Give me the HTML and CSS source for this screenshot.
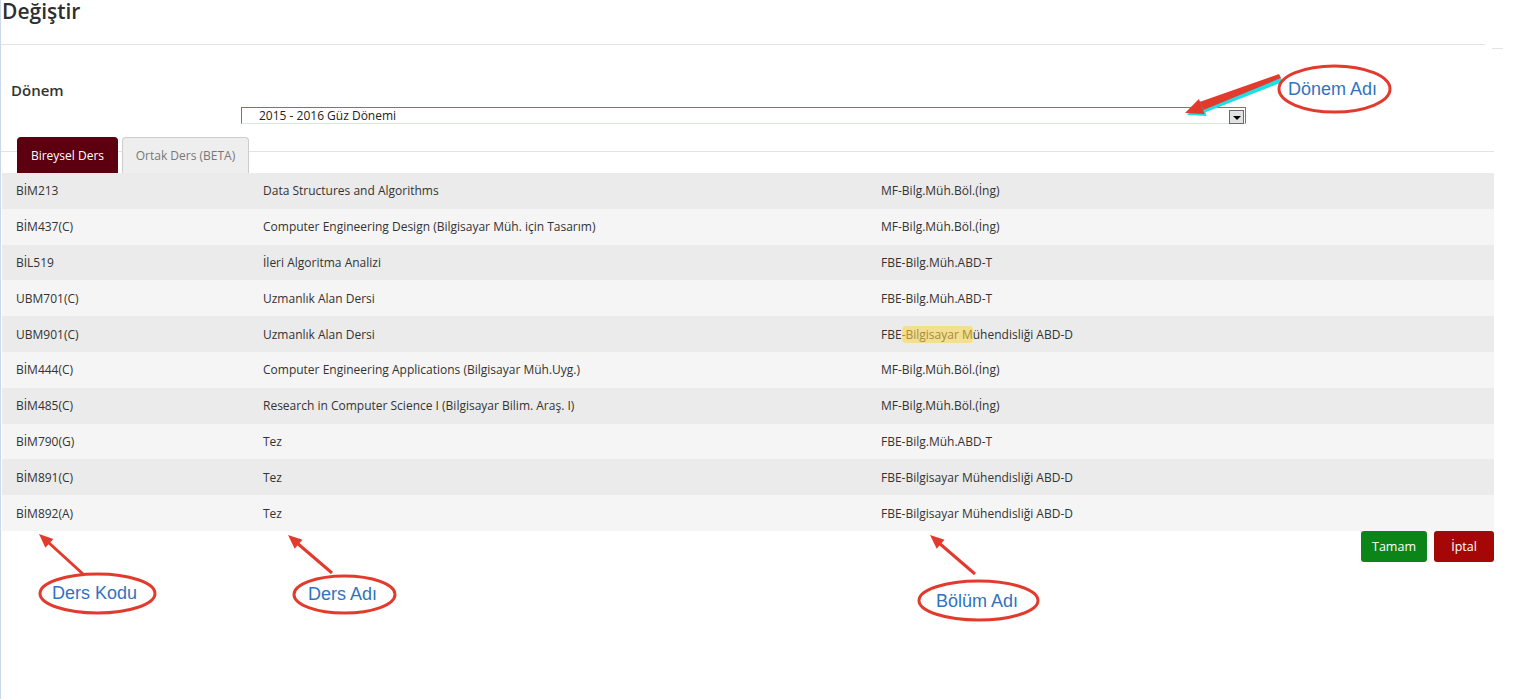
FILE: index.html
```html
<!DOCTYPE html>
<html lang="tr">
<head>
<meta charset="utf-8">
<title>Değiştir</title>
<link rel="stylesheet" href="styles.css">
</head>
<body>
<div class="page">
  <h1 class="title">Değiştir</h1>
  <div class="rule-row"><div class="rule"></div><div class="dash"></div></div>

  <div class="field">
    <div class="label">Dönem</div>
    <div class="select">
      <span class="select-text">2015 - 2016 Güz Dönemi</span>
      <span class="select-btn"><span class="caret"></span></span>
    </div>
  </div>

  <div class="tabs">
    <div class="tab active">Bireysel Ders</div>
    <div class="tab">Ortak Ders (BETA)</div>
  </div>

  <div class="table">
    <div class="row odd"><div class="c1">BİM213</div><div class="c2">Data Structures and Algorithms</div><div class="c3">MF-Bilg.Müh.Böl.(İng)</div></div>
    <div class="row even"><div class="c1">BİM437(C)</div><div class="c2">Computer Engineering Design (Bilgisayar Müh. için Tasarım)</div><div class="c3">MF-Bilg.Müh.Böl.(İng)</div></div>
    <div class="row odd"><div class="c1">BİL519</div><div class="c2">İleri Algoritma Analizi</div><div class="c3">FBE-Bilg.Müh.ABD-T</div></div>
    <div class="row even"><div class="c1">UBM701(C)</div><div class="c2">Uzmanlık Alan Dersi</div><div class="c3">FBE-Bilg.Müh.ABD-T</div></div>
    <div class="row odd"><div class="c1">UBM901(C)</div><div class="c2">Uzmanlık Alan Dersi</div><div class="c3">FBE<span class="hl">-Bilgisayar M</span>ühendisliği ABD-D</div></div>
    <div class="row even"><div class="c1">BİM444(C)</div><div class="c2">Computer Engineering Applications (Bilgisayar Müh.Uyg.)</div><div class="c3">MF-Bilg.Müh.Böl.(İng)</div></div>
    <div class="row odd"><div class="c1">BİM485(C)</div><div class="c2">Research in Computer Science I (Bilgisayar Bilim. Araş. I)</div><div class="c3">MF-Bilg.Müh.Böl.(İng)</div></div>
    <div class="row even"><div class="c1">BİM790(G)</div><div class="c2">Tez</div><div class="c3">FBE-Bilg.Müh.ABD-T</div></div>
    <div class="row odd"><div class="c1">BİM891(C)</div><div class="c2">Tez</div><div class="c3">FBE-Bilgisayar Mühendisliği ABD-D</div></div>
    <div class="row even"><div class="c1">BİM892(A)</div><div class="c2">Tez</div><div class="c3">FBE-Bilgisayar Mühendisliği ABD-D</div></div>
  </div>

  <div class="actions">
    <button class="btn ok">Tamam</button>
    <button class="btn cancel">İptal</button>
  </div>

  <svg class="notes" width="1524" height="699" viewBox="0 0 1524 699">
    <g fill="#22dde6">
      <polygon points="1281,78 1283,82 1205,112.5 1201,104"/>
      <polygon points="1187,115 1200.9,101.1 1206.7,115.9"/>
    </g>
    <g fill="#e23b2e">
      <polygon points="1279,74 1281,78 1203.5,110 1199.5,102"/>
      <polygon points="1185,113 1198.9,99.1 1204.7,113.9"/>
    </g>
    <g stroke="#e23b2e" stroke-width="3" fill="none">
      <line x1="83" y1="574" x2="48" y2="542"/>
      <line x1="332" y1="573" x2="297" y2="543"/>
      <line x1="975" y1="574" x2="939" y2="543"/>
      <ellipse cx="1334.5" cy="89" rx="55.5" ry="23"/>
      <ellipse cx="97.5" cy="593.5" rx="57.5" ry="19.5"/>
      <ellipse cx="344.5" cy="594.5" rx="50.5" ry="18.5"/>
      <ellipse cx="978.5" cy="600.5" rx="59.5" ry="19.5"/>
    </g>
    <g fill="#e23b2e">
      <polygon points="39,534 53.4,539 45.4,547.8"/>
      <polygon points="288,535 302.5,539.7 294.7,548.7"/>
      <polygon points="930,535 944.5,539.7 936.7,548.7"/>
    </g>
    <g class="note-text" fill="#3272bf">
      <text x="1288" y="95">Dönem Adı</text>
      <text x="52" y="599">Ders Kodu</text>
      <text x="308" y="600">Ders Adı</text>
      <text x="936" y="607">Bölüm Adı</text>
    </g>
  </svg>
</div>
</body>
</html>
```
FILE: styles.css
```css
html, body {
  margin: 0;
  padding: 0;
  background: #ffffff;
}
body {
  font-family: "Open Sans", "DejaVu Sans", sans-serif;
  color: #333333;
}
.page {
  position: relative;
  width: 1523px;
  height: 699px;
  border-left: 1px solid #c9d8ea;
  overflow: hidden;
}
.title {
  margin: 0;
  padding: 0 0 0 1px;
  height: 44px;
  box-sizing: border-box;
  font-size: 21px;
  line-height: 23px;
  font-weight: 600;
  color: #2f2f2f;
}
.rule-row {
  display: flex;
  align-items: flex-start;
}
.rule {
  width: 1484px;
  height: 1px;
  background: #e3e3e3;
}
.dash {
  width: 11px;
  height: 1px;
  margin: 4px 0 0 7px;
  background: #e3e3e3;
}
.field {
  padding-top: 31px;
}
.label {
  padding-left: 10px;
  font-size: 15px;
  line-height: 20px;
  font-weight: 600;
  color: #333333;
}
.select {
  margin: 7px 0 0 240px;
  width: 1003px;
  height: 15px;
  border: 1px solid #5b8a5e;
  border-bottom-color: #d2efd2;
  display: flex;
  align-items: center;
  justify-content: space-between;
}
.select-text {
  padding-left: 17px;
  font-size: 12px;
  line-height: 15px;
  color: #222222;
}
.select-btn {
  width: 13px;
  height: 12px;
  margin-right: 1px;
  margin-top: 2px;
  border: 1px solid #6b6b6b;
  background: #e2e2e2;
  display: flex;
  align-items: center;
  justify-content: center;
}
.caret {
  width: 0;
  height: 0;
  border-left: 4px solid transparent;
  border-right: 4px solid transparent;
  border-top: 4px solid #000000;
  margin-top: 2px;
}
.tabs {
  margin-top: 13px;
  width: 1493px;
  height: 36px;
  padding-left: 16px;
  box-sizing: border-box;
  display: flex;
  gap: 4px;
  background: linear-gradient(#e3e3e3, #e3e3e3) no-repeat 0 14px / 100% 1px;
}
.tab {
  height: 36px;
  box-sizing: border-box;
  padding: 0;
  text-align: center;
  border: 1px solid #cccccc;
  border-bottom: none;
  border-radius: 4px 4px 0 0;
  background: #eeeeee;
  color: #777777;
  font-size: 12px;
  line-height: 36px;
}
.tab.active {
  width: 101px;
  background: #5c000f;
  border-color: #5c000f;
  color: #ffffff;
}
.tabs .tab:not(.active) {
  width: 127px;
}
.table {
  margin-left: 1px;
  width: 1492px;
}
.row {
  display: grid;
  grid-template-columns: 261px 618px 1fr;
  height: 35.8px;
  align-items: center;
  font-size: 12px;
  color: #333333;
}
.row.odd { background: #ebebeb; }
.row.even { background: #f5f5f5; }
.c1 { padding-left: 14px; }
.hl {
  background: #f3df8d;
  color: #a88a45;
  border-radius: 4px;
}
.actions {
  width: 1493px;
  display: flex;
  justify-content: flex-end;
  gap: 7px;
  margin-top: 0.5px;
}
.btn {
  height: 31px;
  border: none;
  border-radius: 3px;
  color: #ffffff;
  font-family: "Open Sans", "DejaVu Sans", sans-serif;
  font-size: 12.5px;
  padding: 0;
}
.btn.ok { width: 66px; background: #0b8418; }
.btn.cancel { width: 60px; background: #a50707; }
.notes {
  position: absolute;
  left: -1px;
  top: 0;
  pointer-events: none;
}
.note-text {
  font-family: "Liberation Sans", Arial, sans-serif;
  font-size: 18px;
}
```
